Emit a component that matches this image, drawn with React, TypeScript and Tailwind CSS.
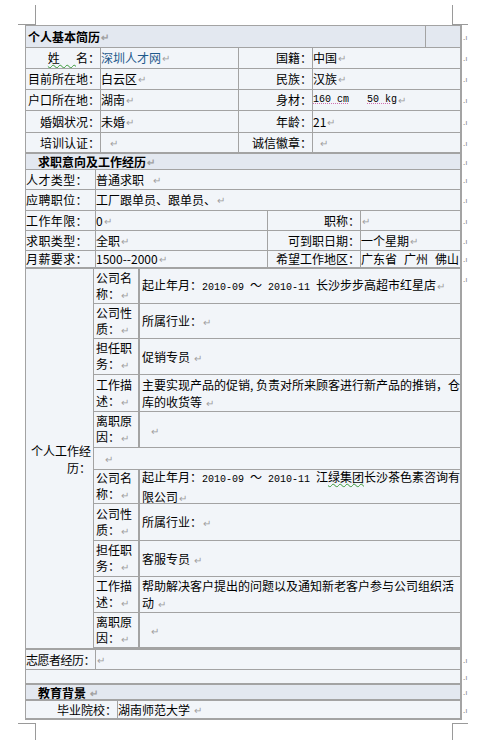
import type { ReactNode } from "react";

const P = () => <span className="ml-[1px] text-[10px] text-[#a0a0a0]">↵</span>;

// little end-of-row marker Word draws right of the table
const Mark = () => (
  <span className="absolute left-[calc(100%+3px)] top-1/2 -translate-y-1/2 text-[8px] leading-none text-[#8a8a8a]">
    .ı
  </span>
);

const Num = ({ children }: { children: ReactNode }) => (
  <span className="font-['Liberation_Mono',monospace] text-[10px]">{children}</span>
);

function Row({
  h,
  children,
  thick,
  head,
  mark = true,
}: {
  h: string;
  children: ReactNode;
  thick?: boolean;
  head?: boolean;
  mark?: boolean;
}) {
  return (
    <div
      className={`relative flex ${h} ${thick ? "border-b-2" : "border-b"} border-[#a3a3a3] ${
        head ? "bg-[#e3e8f0] leading-[13px]" : ""
      }`}
    >
      {children}
      {mark && <Mark />}
    </div>
  );
}

function Cell({ w, children, right, className = "" }: { w?: string; children?: ReactNode; right?: boolean; className?: string }) {
  return (
    <div
      className={`flex items-center overflow-hidden whitespace-nowrap ${w ?? "flex-1"} ${
        w ? "border-r border-[#a3a3a3]" : ""
      } ${right ? "justify-end" : ""} ${className}`}
    >
      {children}
    </div>
  );
}

type Job = { rows: [string, string, ReactNode][] };

function SubRows({ rows }: Job) {
  return (
    <>
      {rows.map(([h, label, value], i) => (
        <div key={i} className={`flex ${h} border-b border-[#a3a3a3]`}>
          <div className="flex w-[46px] flex-col justify-center border-r-2 border-[#a3a3a3] pl-[2px] leading-[16px]">
            <span>{label.slice(0, 3)}</span>
            <span>
              {label.slice(3)}
              <P />
            </span>
          </div>
          <div className="flex flex-1 flex-col justify-center whitespace-nowrap pl-[2px] leading-[17px]">{value}</div>
        </div>
      ))}
    </>
  );
}

export default function App() {
  const job1: Job = {
    rows: [
      [
        "h-[35px]",
        "公司名称：",
        <span>
          起止年月：<Num>2010-09 </Num>～<Num> 2010-11 </Num>长沙步步高超市红星店
          <P />
        </span>,
      ],
      ["h-[35px]", "公司性质：", <span>所属行业：<P /></span>],
      ["h-[36px]", "担任职务：", <span>促销专员 <P /></span>],
      [
        "h-[37px]",
        "工作描述：",
        <>
          <span>主要实现产品的促销, 负责对所来顾客进行新产品的推销，仓</span>
          <span>
            库的收货等 <P />
          </span>
        </>,
      ],
      ["h-[36px]", "离职原因：", <span className="pl-[8px]"><P /></span>],
    ],
  };
  const job2: Job = {
    rows: [
      [
        "h-[34px]",
        "公司名称：",
        <>
          <span>
            起止年月：<Num>2010-09 </Num>～<Num> 2010-11 </Num>江
            <span className="underline decoration-wavy decoration-[#3a9a3a] decoration-[1px]">绿集团</span>
            长沙茶色素咨询有
          </span>
          <span>
            限公司
            <P />
          </span>
        </>,
      ],
      ["h-[37px]", "公司性质：", <span>所属行业：<P /></span>],
      ["h-[36px]", "担任职务：", <span>客服专员 <P /></span>],
      [
        "h-[36px]",
        "工作描述：",
        <>
          <span>帮助解决客户提出的问题以及通知新老客户参与公司组织活</span>
          <span>
            动 <P />
          </span>
        </>,
      ],
      ["h-[35px]", "离职原因：", <span className="pl-[8px]"><P /></span>],
    ],
  };

  return (
    <div className="relative h-[753px] w-[483px] bg-white font-['Noto_Sans_CJK_SC',sans-serif] text-[12px] text-black">
      {/* page corner marks */}
      <div className="absolute left-[18px] top-[5px] h-[20px] w-[18px] border-b border-r border-[#9a9a9a]" />
      <div className="absolute left-[452px] top-[5px] h-[20px] w-[16px] border-b border-l border-[#9a9a9a]" />
      <div className="absolute left-[18px] top-[723px] h-[17px] w-[18px] border-r border-t border-[#9a9a9a]" />
      <div className="absolute left-[452px] top-[723px] h-[17px] w-[16px] border-l border-t border-[#9a9a9a]" />

      <div className="absolute left-[25px] top-[25px] w-[437px] border-l border-r-2 border-t border-[#a3a3a3] bg-[#f2f5f9] leading-[18px]">
        {/* 个人基本简历 */}
        <Row h="h-[22px]" head>
          <Cell className="pl-[2px] font-bold">
            个人基本简历
            <P />
          </Cell>
          <div className="w-[35px] border-l border-[#a3a3a3]" />
        </Row>
        <Row h="h-[21px]">
          <Cell w="w-[75px]" right>
            <span className="underline decoration-wavy decoration-[#3a9a3a] decoration-[1px]">姓&nbsp;&nbsp;&nbsp;&nbsp;&nbsp;&nbsp;</span>
            名：
          </Cell>
          <Cell w="w-[138px]" className="text-[#1f5a8c]">
            深圳人才网
            <P />
          </Cell>
          <Cell w="w-[74px]" right>
            国籍：
          </Cell>
          <Cell>
            中国
            <P />
          </Cell>
        </Row>
        <Row h="h-[21px]">
          <Cell w="w-[75px]" right>
            目前所在地：
          </Cell>
          <Cell w="w-[138px]">
            白云区
            <P />
          </Cell>
          <Cell w="w-[74px]" right>
            民族：
          </Cell>
          <Cell>
            汉族
            <P />
          </Cell>
        </Row>
        <Row h="h-[21px]">
          <Cell w="w-[75px]" right>
            户口所在地：
          </Cell>
          <Cell w="w-[138px]">
            湖南
            <P />
          </Cell>
          <Cell w="w-[74px]" right>
            身材：
          </Cell>
          <Cell>
            <span className="font-['Liberation_Mono',monospace] text-[10px]">
              <span className="underline decoration-dotted decoration-[#d070b0]">160 cm</span>
              &nbsp;&nbsp;&nbsp;
              <span className="underline decoration-dotted decoration-[#d070b0]">50 kg</span>
            </span>
            <P />
          </Cell>
        </Row>
        <Row h="h-[22px]">
          <Cell w="w-[75px]" right>
            婚姻状况：
          </Cell>
          <Cell w="w-[138px]">
            未婚
            <P />
          </Cell>
          <Cell w="w-[74px]" right>
            年龄：
          </Cell>
          <Cell>
            21
            <P />
          </Cell>
        </Row>
        <Row h="h-[21px]" thick>
          <Cell w="w-[75px]" right>
            培训认证：
          </Cell>
          <Cell w="w-[138px]" className="pl-[8px]">
            <P />
          </Cell>
          <Cell w="w-[74px]" right>
            诚信徽章：
          </Cell>
          <Cell className="pl-[6px]">
            <P />
          </Cell>
        </Row>

        {/* 求职意向及工作经历 */}
        <Row h="h-[16px]" head>
          <Cell className="pl-[12px] font-bold">
            求职意向及工作经历
            <P />
          </Cell>
        </Row>
        <Row h="h-[20px]">
          <Cell w="w-[70px]" className="tracking-[0.4px]">人才类型：</Cell>
          <Cell>
            普通求职&nbsp;&nbsp;&nbsp;
            <P />
          </Cell>
        </Row>
        <Row h="h-[21px]">
          <Cell w="w-[70px]" className="tracking-[0.4px]">应聘职位：</Cell>
          <Cell>
            工厂跟单员、跟单员、
            <P />
          </Cell>
        </Row>
        <Row h="h-[20px]">
          <Cell w="w-[70px]" className="tracking-[0.4px]">工作年限：</Cell>
          <Cell w="w-[172px]">
            0<P />
          </Cell>
          <Cell w="w-[93px]" right>
            职称：
          </Cell>
          <Cell>
            <P />
          </Cell>
        </Row>
        <Row h="h-[20px]">
          <Cell w="w-[70px]" className="tracking-[0.4px]">求职类型：</Cell>
          <Cell w="w-[172px]">
            全职
            <P />
          </Cell>
          <Cell w="w-[93px]" right>
            可到职日期：
          </Cell>
          <Cell>
            一个星期
            <P />
          </Cell>
        </Row>
        <Row h="h-[18px]" thick>
          <Cell w="w-[70px]" className="tracking-[0.4px]">月薪要求：</Cell>
          <Cell w="w-[172px]">
            1500--2000
            <P />
          </Cell>
          <Cell w="w-[93px]" right>
            希望工作地区：
          </Cell>
          <Cell className="gap-[7px]">
            <span>广东省</span>
            <span>广州</span>
            <span>佛山</span>
          </Cell>
        </Row>

        {/* 个人工作经历 */}
        <div className="relative flex border-b-2 border-[#a3a3a3]">
          <div className="flex w-[70px] flex-col items-end justify-center border-r border-[#a3a3a3] pr-[2px] leading-[17px]">
            <span>个人工作经</span>
            <span>历：</span>
          </div>
          <div className="flex flex-1 flex-col">
            <SubRows {...job1} />
            <div className="flex h-[22px] items-center border-b border-[#a3a3a3] pl-[10px]">
              <P />
            </div>
            <SubRows {...job2} />
          </div>
          <span className="absolute left-[calc(100%+3px)] top-[6px] text-[8px] leading-none text-[#8a8a8a]">.ı</span>
        </div>

        <Row h="h-[20px]">
          <Cell w="w-[70px]" className="tracking-[-0.5px]">
            志愿者经历：
          </Cell>
          <Cell>
            <P />
          </Cell>
        </Row>
        <Row h="h-[15px]" thick>
          <Cell />
        </Row>
        <Row h="h-[16px]" head thick>
          <Cell className="pl-[12px] font-bold">
            教育背景&nbsp;
            <P />
          </Cell>
        </Row>
        <Row h="h-[19px]" thick>
          <Cell w="w-[92px]" right>
            毕业院校：
          </Cell>
          <Cell>
            湖南师范大学&nbsp;
            <P />
          </Cell>
        </Row>
      </div>
    </div>
  );
}
